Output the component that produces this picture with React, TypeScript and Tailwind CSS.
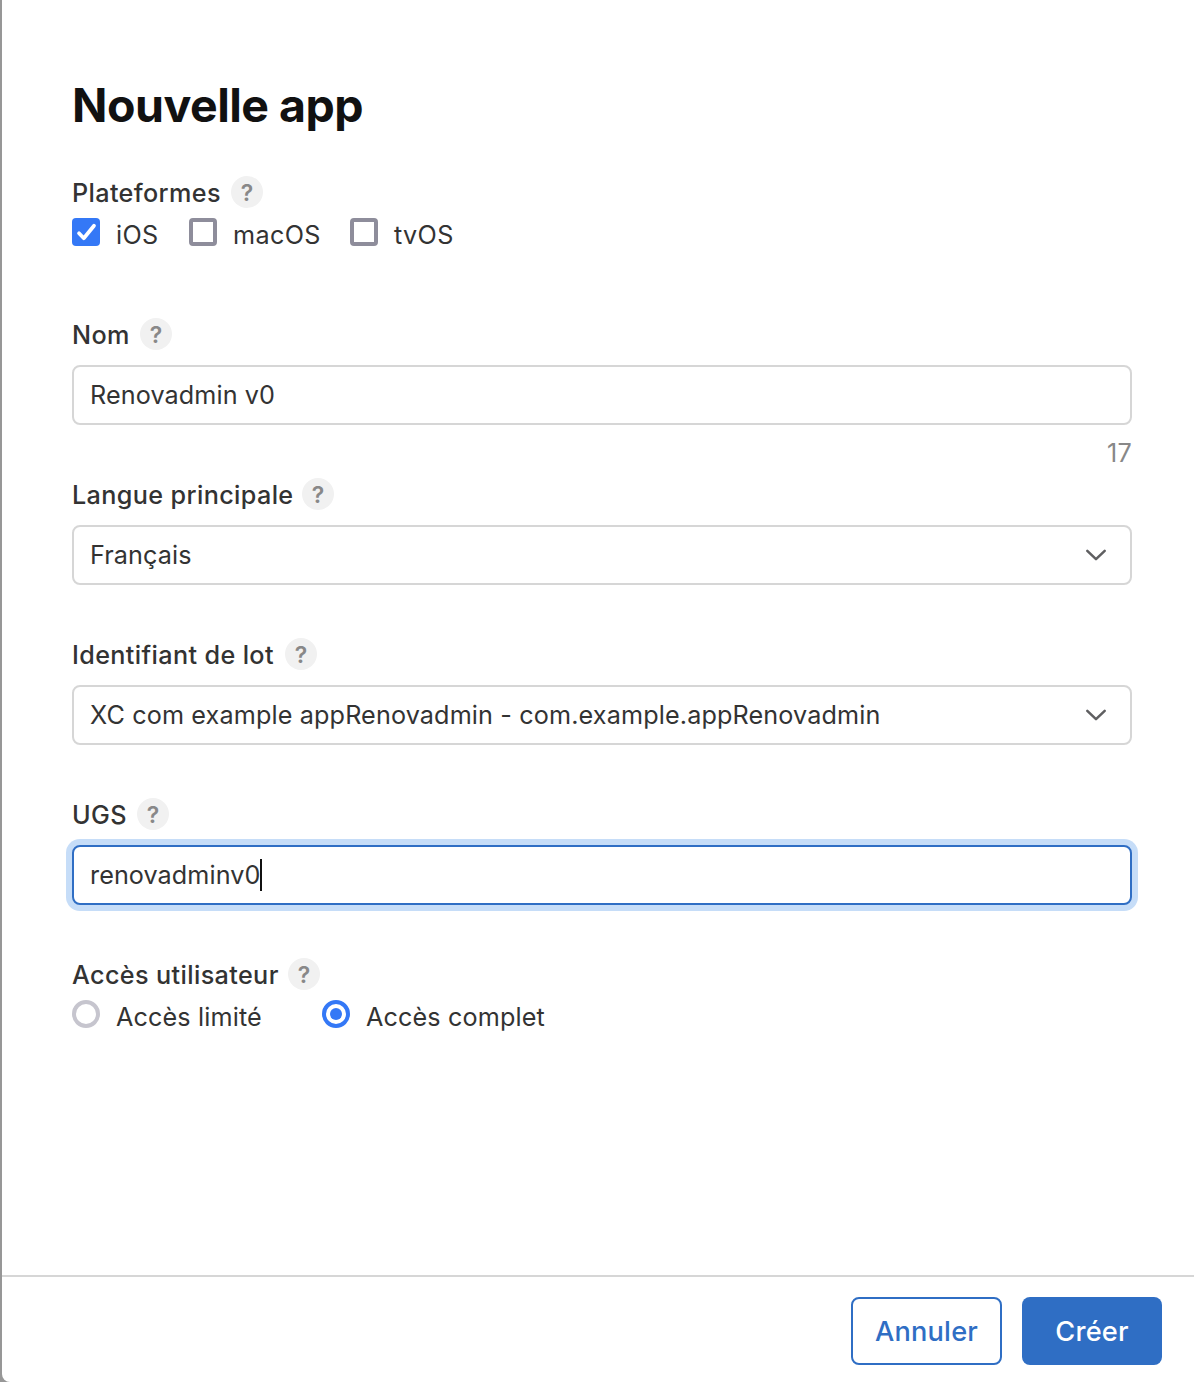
import type { ReactNode } from "react";

function Label({ text, className }: { text: string; className: string }) {
  return (
    <div className="flex h-8 items-center gap-[10px]">
      <span
        className={`relative top-px whitespace-nowrap text-[25.2px] leading-8 font-medium tracking-[0.37px] ${className}`}
      >
        {text}
      </span>
      <span className="flex size-8 items-center justify-center rounded-full bg-[#f1f1f1] text-[23px] leading-8 font-semibold text-[#888]">
        <span className="relative top-px">?</span>
      </span>
    </div>
  );
}

function Chevron() {
  return (
    <svg width="24" height="16" viewBox="0 0 24 16" fill="none" className="mr-[22px]">
      <path d="M3.3 3.8 12 12.2 20.7 3.8" stroke="#5f5f61" strokeWidth="2.5" strokeLinecap="round" strokeLinejoin="round" />
    </svg>
  );
}

function Box({ children, focused = false }: { children: ReactNode; focused?: boolean }) {
  return (
    <div
      className={
        focused
          ? "mt-[15px] flex h-[60px] items-center rounded-[8px] border-2 border-[#2f6ec4] bg-white pl-4 shadow-[0_0_0_6px_#c6ddf8]"
          : "mt-[15px] flex h-[60px] items-center justify-between rounded-[8px] border-2 border-[#d6d6d6] bg-white pl-4"
      }
    >
      {children}
    </div>
  );
}

function Checkbox({ text, checked = false, className }: { text: string; checked?: boolean; className: string }) {
  return (
    <div className="flex h-7 items-center gap-4">
      {checked ? (
        <span className="flex size-7 items-center justify-center rounded-[4px] bg-[#3478f6]">
          <svg width="28" height="28" viewBox="0 0 28 28" fill="none">
            <path d="M7 15.3 11.8 20.2 22 7.8" stroke="#fff" strokeWidth="3.7" strokeLinecap="round" strokeLinejoin="round" />
          </svg>
        </span>
      ) : (
        <span className="size-7 rounded-[4px] border-4 border-[#8e8d9b]" />
      )}
      <span className={`relative top-[3px] whitespace-nowrap text-[25.2px] leading-8 tracking-[0.35px] ${className}`}>
        {text}
      </span>
    </div>
  );
}

function Radio({ text, checked = false, className }: { text: string; checked?: boolean; className: string }) {
  return (
    <div className="flex h-7 items-center gap-4">
      {checked ? (
        <span className="flex size-7 items-center justify-center rounded-full border-4 border-[#3478f6]">
          <span className="size-3 rounded-full bg-[#3478f6]" />
        </span>
      ) : (
        <span className="size-7 rounded-full border-4 border-[#c6c5ce]" />
      )}
      <span className={`relative top-[3px] whitespace-nowrap text-[25.2px] leading-8 tracking-[0.13px] ${className}`}>
        {text}
      </span>
    </div>
  );
}

export default function App() {
  return (
    <div className="h-[1382px] w-[1194px] overflow-hidden bg-[#979797] pl-[2px] font-['Inter',sans-serif] text-[#333]">
      <div className="flex h-full flex-col rounded-bl-[8px] bg-white">
        <main className="h-[1275px] pt-[75px] pr-[62px] pl-[70px]">
          <h1 className="h-[60px] w-[291px] whitespace-nowrap text-[46.5px] leading-[60px] font-bold tracking-[-0.5px] text-[#111]">
            Nouvelle app
          </h1>

          <section className="mt-[41px] h-[142px]">
            <Label text="Plateformes" className="w-[149px]" />
            <div className="mt-[10px] flex">
              <div className="w-[117px]"><Checkbox text="iOS" checked className="w-[43px]" /></div>
              <div className="w-[161px]"><Checkbox text="macOS" className="w-[88px]" /></div>
              <Checkbox text="tvOS" className="w-[60px]" />
            </div>
          </section>

          <section className="h-[160px]">
            <Label text="Nom" className="w-[58px]" />
            <Box><span className="text-[25.2px] leading-8 tracking-[0.1px]">Renovadmin v0</span></Box>
            <div className="mt-3 text-right text-[25.2px] leading-8 tracking-[0.3px] text-[#888]">17</div>
          </section>

          <section className="h-[160px]">
            <Label text="Langue principale" className="w-[220px]" />
            <Box>
              <span className="text-[25.2px] leading-8 tracking-[0.1px]">Français</span>
              <Chevron />
            </Box>
          </section>

          <section className="h-[160px]">
            <Label text="Identifiant de lot" className="w-[203px]" />
            <Box>
              <span className="text-[25.2px] leading-8 tracking-[0.13px]">XC com example appRenovadmin - com.example.appRenovadmin</span>
              <Chevron />
            </Box>
          </section>

          <section className="h-[160px]">
            <Label text="UGS" className="w-[55px]" />
            <Box focused>
              <span className="w-[170px] text-[25.2px] leading-8 tracking-[0.07px]">renovadminv0</span>
              <span className="h-8 w-[2px] bg-[#111]" />
            </Box>
          </section>

          <section>
            <Label text="Accès utilisateur" className="w-[206px]" />
            <div className="mt-[10px] flex">
              <div className="w-[250px]"><Radio text="Accès limité" className="w-[146px]" /></div>
              <Radio text="Accès complet" checked className="w-[178px]" />
            </div>
          </section>
        </main>

        <footer className="flex h-[107px] justify-end gap-5 border-t-2 border-[#d6d6d6] pt-5 pr-8 text-[27.2px] leading-9 font-medium tracking-[0.2px]">
          <button className="flex h-[68px] w-[151px] items-center justify-center rounded-[8px] border-2 border-[#2f6ec4] text-[#2f6ec4]">
            <span className="relative top-px">Annuler</span>
          </button>
          <button className="flex h-[68px] w-[140px] items-center justify-center rounded-[8px] bg-[#2f6ec4] text-white">
            <span className="relative top-px">Créer</span>
          </button>
        </footer>
      </div>
    </div>
  );
}
